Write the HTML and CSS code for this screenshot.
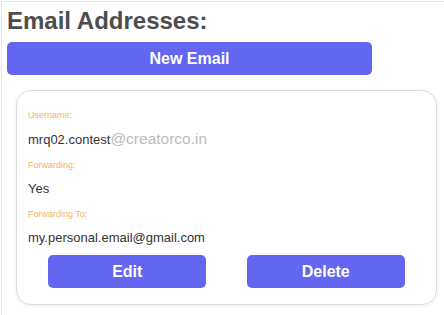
FILE: index.html
```html
<!DOCTYPE html>
<html lang="en">
<head>
  <meta charset="UTF-8" />
  <title>Email Addresses</title>
  <link rel="stylesheet" href="styles.css">
</head>
<body>
  <div id="frame">
    <h1 class="title">Email Addresses:</h1>
    <button class="btn btn-wide">New Email</button>

    <div class="card">
      <div class="field">
        <p class="label">Username:</p>
        <p class="value">mrq02.contest<span class="domain">@creatorco.in</span></p>
      </div>
      <div class="field">
        <p class="label">Forwarding:</p>
        <p class="value">Yes</p>
      </div>
      <div class="field">
        <p class="label">Forwarding To:</p>
        <p class="value">my.personal.email@gmail.com</p>
      </div>
      <div class="actions">
        <button class="btn btn-half">Edit</button>
        <button class="btn btn-half">Delete</button>
      </div>
    </div>
  </div>
</body>
</html>
```

FILE: styles.css
```css
body {
  margin: 0;
  background: #fff;
  font-family: "Liberation Sans", Arial, sans-serif;
  color: #333;
  overflow: hidden;
}
#frame {
  margin: 1px 0 0 1px;
  height: 320px;
  border-top: 1px solid #e6e6e6;
  border-left: 1px solid #e6e6e6;
  padding: 5px 0 0 5px;
}
.title {
  margin: 0;
  font-size: 24px;
  line-height: 28px;
  font-weight: bold;
  color: #4d4d4d;
}
.btn {
  border: none;
  border-radius: 5px;
  background: #6366f1;
  color: #fff;
  font-family: "Liberation Sans", Arial, sans-serif;
  font-weight: bold;
  font-size: 16px;
  height: 33px;
  padding: 0;
  cursor: pointer;
}
.btn-wide {
  display: block;
  width: 365px;
  margin-top: 7px;
}
.card {
  margin: 15px 7px 0 9px;
  border: 1px solid #dcdcdc;
  border-radius: 15px;
  box-shadow: 0 1px 4px rgba(0, 0, 0, 0.08);
  padding: 18px 11px 16px 11px;
}
.field + .field {
  margin-top: 12px;
}
.field p {
  margin: 0;
}
.label {
  font-size: 9px;
  line-height: 12px;
  color: #f6b35a;
  margin-bottom: 10px !important;
}
.value {
  font-size: 13px;
  line-height: 15px;
  color: #333;
}
.domain {
  font-size: 15.5px;
  color: #bbb;
}
.actions {
  display: flex;
  justify-content: space-around;
  margin-top: 10px;
}
.btn-half {
  width: 158px;
}
```
